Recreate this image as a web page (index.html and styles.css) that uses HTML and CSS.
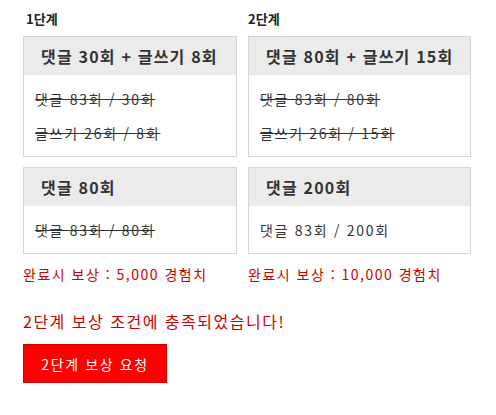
FILE: index.html
```html
<!DOCTYPE html>
<html lang="ko">
<head>
  <meta charset="UTF-8" />
  <meta name="viewport" content="width=device-width, initial-scale=1.0"/>
  <title>단계별 보상</title>
  <link rel="stylesheet" href="styles.css">
</head>
<body>
  <div class="steps">
    <div class="step step1">
      <h3 class="step-title">1단계</h3>
      <div class="mission">
        <div class="mission-head">댓글 30회 + 글쓰기 8회</div>
        <div class="mission-body">
          <p class="done">댓글 83회 / 30회</p>
          <p class="done">글쓰기 26회 / 8회</p>
        </div>
      </div>
      <div class="mission">
        <div class="mission-head">댓글 80회</div>
        <div class="mission-body">
          <p class="done">댓글 83회 / 80회</p>
        </div>
      </div>
      <p class="reward">완료시 보상 : 5,000 경험치</p>
    </div>

    <div class="step step2">
      <h3 class="step-title">2단계</h3>
      <div class="mission">
        <div class="mission-head">댓글 80회 + 글쓰기 15회</div>
        <div class="mission-body">
          <p class="done">댓글 83회 / 80회</p>
          <p class="done">글쓰기 26회 / 15회</p>
        </div>
      </div>
      <div class="mission">
        <div class="mission-head">댓글 200회</div>
        <div class="mission-body">
          <p>댓글 83회 / 200회</p>
        </div>
      </div>
      <p class="reward">완료시 보상 : 10,000 경험치</p>
    </div>
  </div>

  <p class="notice">2단계 보상 조건에 충족되었습니다!</p>
  <button class="btn">2단계 보상 요청</button>
</body>
</html>
```

FILE: styles.css
```css
body {
  margin: 0;
  padding: 9px 23px;
  font-family: "Noto Sans CJK KR", "Noto Sans", sans-serif;
  color: #333;
  background: #fff;
}
.steps {
  display: grid;
  grid-template-columns: 214px 223px;
  column-gap: 11px;
}
.step-title {
  margin: 0 0 7px 3px;
  font-size: 13px;
  line-height: 20px;
  font-weight: bold;
  color: #222;
}
.step2 .step-title {
  margin-left: 0;
}
.mission {
  border: 1px solid #d6d6d6;
  margin-bottom: 10px;
}
.mission-head {
  background: #ebebeb;
  height: 38px;
  line-height: 38px;
  padding: 0 0 0 17px;
  font-size: 16px;
  font-weight: bold;
  letter-spacing: 1.2px;
  white-space: nowrap;
}
.mission-body {
  padding: 7px 11px 6px;
}
.mission-body p {
  margin: 0;
  font-size: 14px;
  line-height: 34px;
  letter-spacing: 1.7px;
  white-space: nowrap;
}
.done {
  text-decoration: line-through;
}
.reward {
  margin: 2px 0 0;
  font-size: 14px;
  line-height: 20px;
  letter-spacing: 1.5px;
  white-space: nowrap;
  color: #c00;
}
.notice {
  margin: 26px 0 12px;
  font-size: 16px;
  line-height: 22px;
  letter-spacing: 1.5px;
  color: #c00;
}
.btn {
  width: 144px;
  height: 39px;
  padding: 0;
  border: 1px solid #c00;
  background: #ff0000;
  color: #fff;
  font-family: inherit;
  font-size: 14px;
  letter-spacing: 1.6px;
  cursor: pointer;
}
```
